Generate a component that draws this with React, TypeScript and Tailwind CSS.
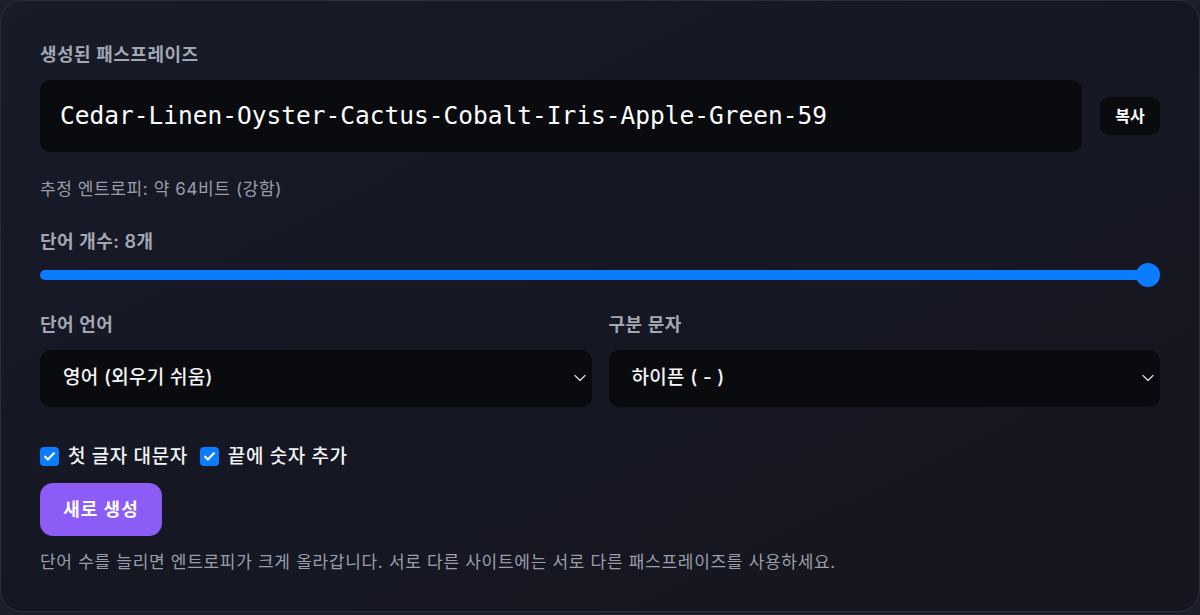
import React, { useState } from 'react';

const ChevronDown = () => (
    <svg width="12" height="8" viewBox="0 0 12 8" fill="none" stroke="currentColor" strokeWidth="1.4" strokeLinecap="round" strokeLinejoin="round">
        <path d="M1 1.5l5 5 5-5" />
    </svg>
);

const CheckBox = ({ checked, label }: { checked: boolean; label: string }) => (
    <label className="flex items-center gap-[9px]">
        <span className={`flex h-[19px] w-[19px] items-center justify-center rounded-[4px] ${checked ? 'bg-[#0a7cff]' : 'bg-white'}`}>
            {checked && (
                <svg width="13" height="13" viewBox="0 0 24 24" fill="none" stroke="white" strokeWidth="4" strokeLinecap="round" strokeLinejoin="round">
                    <path d="M4 12.5l5 5L20 6" />
                </svg>
            )}
        </span>
        <span className="text-[19px] font-medium tracking-[0.6px] text-[#f3f4f6]">{label}</span>
    </label>
);

const Select = ({ label, value }: { label: string; value: string }) => (
    <div className="flex flex-col">
        <span className="mb-[12px] text-[18px] font-semibold tracking-[0.5px] text-[#a3a7b3]">{label}</span>
        <div className="flex h-[57px] items-center justify-between rounded-[10px] bg-[#0a0b0f] pl-[23px] pr-[6px] text-[#d1d5db]">
            <span className="text-[19px] font-medium tracking-[0.3px] text-[#f5f5f7]">{value}</span>
            <ChevronDown />
        </div>
    </div>
);

export default function App() {
    const [words] = useState(8);
    return (
        <div className="h-[615px] w-[1200px] bg-[#1c1f2b]" style={{ fontFamily: 'Inter, "Noto Sans CJK KR", sans-serif' }}>
            <div className="h-[612px] rounded-[22px] border border-[#2a2e3c] bg-gradient-to-br from-[#181b28] via-[#151823] to-[#17151f] px-[39px] pt-[40px]">
                <div className="text-[18px] font-semibold tracking-[0.5px] text-[#a3a7b3]">생성된 패스프레이즈</div>
                <div className="mt-[12px] flex items-center gap-[18px]">
                    <div className="flex h-[72px] flex-1 items-center rounded-[10px] bg-[#0a0b0f] pl-[20px]">
                        <span className="text-[24.5px] text-white" style={{ fontFamily: '"DejaVu Sans Mono", monospace' }}>
                            Cedar-Linen-Oyster-Cactus-Cobalt-Iris-Apple-Green-59
                        </span>
                    </div>
                    <button className="h-[38px] w-[60px] rounded-[9px] bg-[#0a0b0f] text-[16px] font-bold text-white">복사</button>
                </div>
                <div className="mt-[25px] text-[17px] tracking-[0.6px] text-[#9a9eaa]">추정 엔트로피: 약 64비트 (강함)</div>
                <div className="mt-[25px] text-[18px] font-semibold tracking-[0.5px] text-[#a3a7b3]">단어 개수: {words}개</div>
                <div className="relative mt-[8px] h-[24px]">
                    <div className="absolute left-0 right-[10px] top-[7px] h-[10px] rounded-full bg-[#0a7cff]" />
                    <div className="absolute right-0 top-0 h-[24px] w-[24px] rounded-full bg-[#0a7cff]" />
                </div>
                <div className="mt-[24px] grid grid-cols-2 gap-[17px]">
                    <Select label="단어 언어" value="영어 (외우기 쉬움)" />
                    <Select label="구분 문자" value="하이픈 ( - )" />
                </div>
                <div className="mt-[36px] flex items-center gap-[12px]">
                    <CheckBox checked label="첫 글자 대문자" />
                    <CheckBox checked label="끝에 숫자 추가" />
                </div>
                <button className="mt-[12px] h-[53px] w-[122px] rounded-[13px] bg-[#8b5cf6] text-[18px] font-bold tracking-[1px] text-white">새로 생성</button>
                <div className="mt-[14px] text-[17px] tracking-[0.7px] text-[#9a9eaa]">
                    단어 수를 늘리면 엔트로피가 크게 올라갑니다. 서로 다른 사이트에는 서로 다른 패스프레이즈를 사용하세요.
                </div>
            </div>
        </div>
    );
}
